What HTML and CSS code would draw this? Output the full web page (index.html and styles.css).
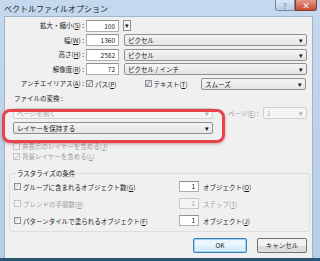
FILE: index.html
```html
<!DOCTYPE html>
<html lang="ja">
<head>
    <meta charset="UTF-8">
    <title>ベクトルファイルオプション</title>
    <link rel="stylesheet" href="styles.css">
</head>
<body>
    <div class="window">
        <div class="titlebar">
            <span class="title">ベクトルファイルオプション</span>
            <div class="caption-buttons">
                <div class="cap help">?</div>
                <div class="cap close">×</div>
            </div>
        </div>
        <div class="content">
            <div class="form">
                <div class="label">拡大・縮小(<u>S</u>) :</div>
                <div class="ctrl">
                    <div class="input w33">100</div>
                    <div class="spin">▾</div>
                </div>

                <div class="label">幅(<u>W</u>) :</div>
                <div class="ctrl">
                    <div class="input w33">1360</div>
                    <div class="select wide">ピクセル<span class="arrow">▾</span></div>
                </div>

                <div class="label">高さ(<u>H</u>) :</div>
                <div class="ctrl">
                    <div class="input w33">2582</div>
                    <div class="select wide">ピクセル<span class="arrow">▾</span></div>
                </div>

                <div class="label">解像度(<u>R</u>) :</div>
                <div class="ctrl">
                    <div class="input w33">72</div>
                    <div class="select wide">ピクセル / インチ<span class="arrow">▾</span></div>
                </div>

                <div class="label">アンチエイリアス(<u>A</u>) :</div>
                <div class="ctrl">
                    <label class="check on"><span class="box">✓</span>パス(<u>P</u>)</label>
                    <label class="check on text-check"><span class="box">✓</span>テキスト(<u>T</u>)</label>
                    <div class="select smooth">スムーズ<span class="arrow">▾</span></div>
                </div>
            </div>

            <div class="section">
                <div class="section-title">ファイルの変換 :</div>
                <div class="convert-row">
                    <div class="select layer disabled">ページを開く<span class="arrow">▾</span></div>
                    <div class="page">
                        <span class="muted">ページ(<u>E</u>) :</span>
                        <div class="select page-select disabled">1<span class="arrow">▾</span></div>
                    </div>
                </div>
                <div class="select layer keep">レイヤーを保持する<span class="arrow">▾</span></div>
                <label class="check disabled first"><span class="box"></span>非表示のレイヤーを含める(<u>J</u>)</label>
                <label class="check disabled on"><span class="box">✓</span>背景レイヤーを含める(<u>L</u>)</label>
            </div>

            <fieldset class="group">
                <legend>ラスタライズの条件</legend>
                <div class="raster-row">
                    <label class="check"><span class="box"></span>グループに含まれるオブジェクト数(<u>G</u>)</label>
                    <div class="unit"><div class="input small">1</div>オブジェクト(<u>O</u>)</div>
                </div>
                <div class="raster-row">
                    <label class="check disabled"><span class="box"></span>ブレンドの手順数(<u>B</u>)</label>
                    <div class="unit muted"><div class="input small disabled">1</div>ステップ(<u>T</u>)</div>
                </div>
                <div class="raster-row">
                    <label class="check"><span class="box"></span>パターンタイルで塗られるオブジェクト(<u>F</u>)</label>
                    <div class="unit"><div class="input small">1</div>オブジェクト(<u>J</u>)</div>
                </div>
            </fieldset>

            <div class="buttons">
                <div class="button default">OK</div>
                <div class="button cancel">キャンセル</div>
            </div>

            <div class="highlight"></div>
        </div>
    </div>
</body>
</html>
```

FILE: styles.css
```css
* {
    box-sizing: border-box;
}

body {
    margin: 0;
    font-family: "Noto Sans CJK JP", "Noto Sans", sans-serif;
    font-size: 6.5px;
    color: #1a1a1a;
    background-color: #ffffff;
}

u {
    text-decoration: underline;
}

.window {
    width: 320px;
    height: 261px;
    background: linear-gradient(#c4d8ee, #b7cde6);
    border-bottom: 3px solid #2b5575;
    display: flex;
    flex-direction: column;
    overflow: hidden;
}

.titlebar {
    height: 16px;
    display: flex;
    align-items: center;
    justify-content: space-between;
    padding: 0 3px 0 4px;
    flex-shrink: 0;
}

.title {
    font-size: 8px;
    color: #222;
}

.caption-buttons {
    display: flex;
    align-self: flex-start;
}

.cap {
    height: 11px;
    font-size: 8px;
    line-height: 11px;
    text-align: center;
    border: 1px solid #6f8aa6;
    border-top: none;
    color: #fff;
}

.help {
    width: 20px;
    background: linear-gradient(#dbe7f4, #b9cde3);
    color: #6b7f94;
    border-radius: 0 0 0 3px;
}

.close {
    width: 22px;
    background: linear-gradient(#e5988a, #c74a36);
    border-color: #8c3a2e;
    border-radius: 0 0 3px 0;
    font-weight: bold;
}

.content {
    position: relative;
    flex: 1;
    margin: 0 7px 0 4px;
    background-color: #f0f0f0;
    border: 1px solid #9fb4cc;
    border-bottom: none;
    padding: 2px 0 0 0;
}

.form {
    display: grid;
    grid-template-columns: 80px 1fr;
    row-gap: 1.5px;
}

.label {
    text-align: right;
    height: 13px;
    line-height: 13px;
    padding-right: 1px;
}

.ctrl {
    display: flex;
    align-items: center;
    padding-left: 1px;
}

.input {
    height: 12px;
    background: #fff;
    border: 1px solid #abadb3;
    border-top-color: #8e9095;
    text-align: right;
    padding-right: 3px;
    line-height: 10px;
}

.w33 {
    width: 33px;
}

.spin {
    width: 8px;
    height: 11px;
    margin-left: 4px;
    border: 1px solid #8e9095;
    background: #f4f4f4;
    font-size: 7px;
    line-height: 9px;
    text-align: center;
}

.select {
    height: 12px;
    display: flex;
    align-items: center;
    justify-content: space-between;
    padding: 0 3px 0 3px;
    border: 1px solid #8e9095;
    border-radius: 2px;
    background: linear-gradient(#f5f5f5, #e4e4e4);
    flex-shrink: 0;
}

.arrow {
    font-size: 7px;
    color: #111;
}

.wide {
    width: 183px;
    margin-left: 5px;
}

.smooth {
    width: 105px;
    margin-left: auto;
    margin-right: 6px;
}

.check {
    display: flex;
    align-items: center;
    height: 10px;
}

.box {
    width: 7px;
    height: 7px;
    margin-right: 2px;
    border: 1px solid #8f8f8f;
    background: linear-gradient(135deg, #dcdcdc, #f8f8f8);
    font-size: 6px;
    line-height: 5px;
    text-align: center;
    color: #2a4da0;
}

.text-check {
    margin-left: 28px;
}

.check.disabled {
    color: #a0a0a0;
}

.check.disabled .box {
    border-color: #c4c4c4;
    background: #f4f4f4;
    color: #a0a0a0;
}

.section {
    padding: 3px 0 0 8px;
    display: flex;
    flex-direction: column;
}

.section-title {
    height: 10px;
    line-height: 10px;
    margin-left: 1px;
}

.convert-row {
    display: flex;
    align-items: center;
    margin-top: 4px;
}

.layer {
    width: 200px;
}

.convert-row .layer {
    height: 11px;
}

.disabled.select {
    border-color: #d0d0d0;
    background: #f4f4f4;
    color: #a8a8a8;
}

.disabled .arrow {
    color: #a8a8a8;
}

.keep {
    margin-top: 3px;
}

.check.first {
    margin-top: 7px;
}

.page {
    display: flex;
    align-items: center;
    margin-left: 15px;
}

.muted {
    color: #a0a0a0;
}

.page-select {
    width: 44px;
    margin-left: 4px;
}

.group {
    margin: 7px 2px 0 4px;
    border: 1px solid #d5dfe5;
    border-radius: 3px;
    padding: 0 0 2px 4px;
}

.group legend {
    padding: 0 1px;
    margin-left: 2px;
    line-height: 10px;
}

.raster-row {
    display: flex;
    align-items: center;
    height: 17px;
}

.unit {
    display: flex;
    align-items: center;
    margin-left: auto;
    width: 130px;
}

.small {
    width: 20px;
    height: 11px;
    line-height: 9px;
    margin-right: 4px;
}

.input.disabled {
    border-color: #c8c8c8;
    background: #f4f4f4;
}

.buttons {
    display: flex;
    justify-content: flex-end;
    gap: 10px;
    padding: 6px 5px 0 0;
}

.button {
    width: 54px;
    height: 15px;
    line-height: 13px;
    text-align: center;
    border: 1px solid #707070;
    border-radius: 2px;
    background: linear-gradient(#f2f2f2 50%, #dddddd 50%);
}

.cancel {
    width: 50px;
}

.default {
    border-color: #3c7fb1;
    box-shadow: inset 0 0 0 1px #9ed5f5;
    background: linear-gradient(#eaf6fd 50%, #d9f0fc 50%);
}

.highlight {
    position: absolute;
    left: -3px;
    top: 92px;
    width: 223px;
    height: 34px;
    border: 3px solid #e8434b;
    border-radius: 8px;
    box-shadow: 0 1px 3px rgba(120, 0, 0, 0.35);
}
```
